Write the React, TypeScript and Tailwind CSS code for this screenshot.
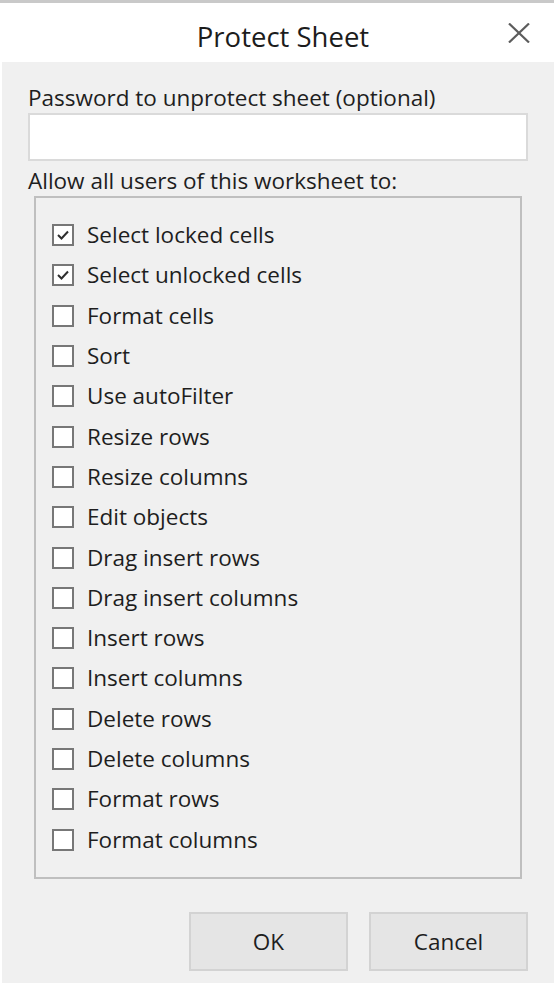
import React from 'react'

const permissions: { label: string; checked: boolean }[] = [
  { label: 'Select locked cells', checked: true },
  { label: 'Select unlocked cells', checked: true },
  { label: 'Format cells', checked: false },
  { label: 'Sort', checked: false },
  { label: 'Use autoFilter', checked: false },
  { label: 'Resize rows', checked: false },
  { label: 'Resize columns', checked: false },
  { label: 'Edit objects', checked: false },
  { label: 'Drag insert rows', checked: false },
  { label: 'Drag insert columns', checked: false },
  { label: 'Insert rows', checked: false },
  { label: 'Insert columns', checked: false },
  { label: 'Delete rows', checked: false },
  { label: 'Delete columns', checked: false },
  { label: 'Format rows', checked: false },
  { label: 'Format columns', checked: false },
]

const CheckBox = ({ checked }: { checked: boolean }) => (
  <div className="w-[22px] h-[22px] shrink-0 border-2 border-[#777777] bg-white flex items-center justify-center">
    {checked && (
      <svg width="14" height="14" viewBox="0 0 14 14" fill="none">
        <polyline points="2,7 5.5,10.5 12,3.5" stroke="#2e2e2e" strokeWidth="2" />
      </svg>
    )}
  </div>
)

export default function App() {
  return (
    <div
      className="w-[554px] h-[992px] bg-white border-t-[3px] border-[#c9c9c9] flex flex-col text-[#1e1e1e]"
      style={{ fontFamily: '"Open Sans", "Noto Sans", sans-serif' }}
    >
      {/* title bar */}
      <div className="h-[59px] flex shrink-0">
        <div className="flex-1 pl-[58px] pt-[16px] text-center text-[27.5px] leading-[36px] text-[#1c1c1c]">
          Protect Sheet
        </div>
        <div className="w-[46px] pt-[20px]">
          <svg width="22" height="20" viewBox="0 0 22 20" fill="none">
            <line x1="1" y1="0.5" x2="21" y2="19.5" stroke="#5c5c5c" strokeWidth="2.2" />
            <line x1="21" y1="0.5" x2="1" y2="19.5" stroke="#5c5c5c" strokeWidth="2.2" />
          </svg>
        </div>
      </div>

      {/* body */}
      <div className="ml-[2px] h-[921px] bg-[#f0f0f0] pl-[26px] pr-[26px] pt-[21px] text-[22.5px] leading-[30px]">
        <div>Password to unprotect sheet (optional)</div>
        <div className="h-[48px] bg-white border-2 border-[#dadada]" />
        <div className="mt-[5px]">Allow all users of this worksheet to:</div>

        <div className="ml-[6px] w-[488px] h-[683px] border-2 border-[#bfbfbf] pl-[16px] pt-[17px]">
          {permissions.map((p) => (
            <div key={p.label} className="h-[40.3px] flex items-center gap-[13px]">
              <CheckBox checked={p.checked} />
              <span>{p.label}</span>
            </div>
          ))}
        </div>

        <div className="mt-[33px] flex justify-end gap-[21px]">
          <button className="w-[159px] h-[59px] bg-[#e5e5e5] border-2 border-[#d3d3d3] text-[#1e1e1e]">
            OK
          </button>
          <button className="w-[159px] h-[59px] bg-[#e5e5e5] border-2 border-[#d3d3d3] text-[#1e1e1e]">
            Cancel
          </button>
        </div>
      </div>
    </div>
  )
}
